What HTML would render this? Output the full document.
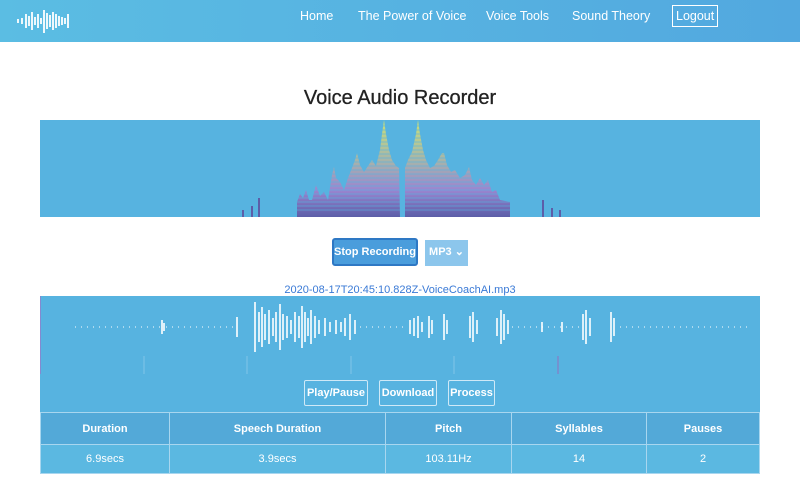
<!DOCTYPE html>
<html><head><meta charset="utf-8"><style>
*{margin:0;padding:0;box-sizing:border-box}
body{width:800px;height:483px;overflow:hidden;background:#fff;font-family:"Liberation Sans",sans-serif;position:relative}
.nav{position:absolute;left:0;top:0;width:800px;height:42px;background:linear-gradient(90deg,#5bbde3,#52a8df)}
.nav a{position:absolute;top:9px;color:#fff;font-size:12.5px}
.logout{border:1px solid #fff;padding:3px 3px;top:5px!important}
h1{position:absolute;top:87px;width:800px;text-align:center;font-size:20px;font-weight:normal;color:#222;-webkit-text-stroke:.3px #222}
.viz{position:absolute;left:40px;top:120px;width:720px;height:97px;background:#57b3e0}
.btn{position:absolute;color:#fff;font-size:11px;font-weight:bold;text-align:center}
.fn{position:absolute;top:284px;width:800px;text-align:center;color:#3a7ad6;font-size:11px}
.wave{position:absolute;left:40px;top:296px;width:720px;height:116px;background:#57b3e0}
table{position:absolute;left:40px;top:412px;width:720px;border-collapse:collapse;color:#fff;font-size:11px;text-align:center}
th{background:#53a9d8;height:32px;border:1px solid #a8d6ef}
td{background:#5bb8e1;height:29px;border:1px solid #a8d6ef}
</style></head><body>
<div class="nav">
<svg style="position:absolute;left:17px;top:8px" width="55" height="26" stroke="#fff" stroke-width="1.8">
<line x1="1" y1="11" x2="1" y2="15"/><line x1="5" y1="10" x2="5" y2="16"/><line x1="9" y1="6" x2="9" y2="20"/><line x1="12" y1="8" x2="12" y2="18"/><line x1="15" y1="4" x2="15" y2="22"/><line x1="18" y1="9" x2="18" y2="17"/><line x1="21" y1="6" x2="21" y2="20"/><line x1="24" y1="10" x2="24" y2="16"/><line x1="27" y1="2" x2="27" y2="25"/><line x1="30" y1="5" x2="30" y2="21"/><line x1="33" y1="7" x2="33" y2="19"/><line x1="36" y1="4" x2="36" y2="22"/><line x1="39" y1="6" x2="39" y2="20"/><line x1="42" y1="8" x2="42" y2="18"/><line x1="45" y1="9" x2="45" y2="17"/><line x1="48" y1="10" x2="48" y2="16"/><line x1="51" y1="6" x2="51" y2="20"/>
</svg>
<a style="left:300px">Home</a><a style="left:358px">The Power of Voice</a><a style="left:486px">Voice Tools</a><a style="left:572px">Sound Theory</a><a class="logout" style="left:672px">Logout</a>
</div>
<h1>Voice Audio Recorder</h1>
<div class="viz">
<svg width="720" height="97">
<defs><linearGradient id="g" x1="0" y1="0" x2="0" y2="1"><stop offset="0" stop-color="#c8e07a"/><stop offset=".4" stop-color="#a8b7a8"/><stop offset=".72" stop-color="#9a86d0"/><stop offset="1" stop-color="#5c5ea8"/></linearGradient></defs>
<polygon fill="url(#g)" points="257,97 257,82 260,74 263,78 266,70 269,80 272,80 276,65 280,76 284,72 288,80 292,55 294,47 296,58 300,62 304,70 308,58 312,48 315,40 317,33 320,45 324,52 328,46 332,40 336,46 340,30 342,14 344,0 346,14 349,30 352,40 356,46 359,48 360,97 365,97 365,48 368,40 372,32 376,14 378,0 380,14 383,30 386,40 390,48 394,46 398,40 402,33 404,33 407,45 411,52 415,50 420,58 425,55 429,47 432,60 436,65 440,58 444,65 448,60 452,72 456,70 460,80 470,82 470,97"/>
<g stroke="#57b3e0" stroke-width="1" opacity=".6">
<line x1="257" y1="90" x2="470" y2="90"/><line x1="257" y1="86" x2="470" y2="86"/><line x1="257" y1="82" x2="470" y2="82"/><line x1="257" y1="78" x2="470" y2="78"/><line x1="257" y1="74" x2="470" y2="74"/><line x1="257" y1="70" x2="470" y2="70"/><line x1="257" y1="66" x2="470" y2="66"/><line x1="257" y1="62" x2="470" y2="62"/><line x1="257" y1="58" x2="470" y2="58"/><line x1="257" y1="54" x2="470" y2="54"/><line x1="257" y1="50" x2="470" y2="50"/><line x1="257" y1="46" x2="470" y2="46"/><line x1="257" y1="42" x2="470" y2="42"/><line x1="257" y1="38" x2="470" y2="38"/><line x1="257" y1="34" x2="470" y2="34"/><line x1="257" y1="30" x2="470" y2="30"/><line x1="257" y1="26" x2="470" y2="26"/><line x1="257" y1="22" x2="470" y2="22"/><line x1="257" y1="18" x2="470" y2="18"/><line x1="257" y1="14" x2="470" y2="14"/><line x1="257" y1="10" x2="470" y2="10"/><line x1="257" y1="6" x2="470" y2="6"/></g>
<rect x="202" y="90" width="2" height="7" fill="#5c5ea8"/><rect x="211" y="86" width="2" height="11" fill="#5c5ea8"/><rect x="218" y="78" width="2" height="19" fill="#5c5ea8"/><rect x="502" y="80" width="2" height="17" fill="#5c5ea8"/><rect x="511" y="88" width="2" height="9" fill="#5c5ea8"/><rect x="519" y="90" width="2" height="7" fill="#5c5ea8"/>
</svg></div>
<div class="btn" style="left:332px;top:238px;width:86px;height:28px;background:#4a9ddc;border:2px solid #2e78c4;border-radius:3px;line-height:24px">Stop Recording</div>
<div class="btn" style="left:425px;top:240px;width:43px;height:26px;background:#8cc6ec;line-height:25px">MP3 ⌄</div>
<div class="fn">2020-08-17T20:45:10.828Z-VoiceCoachAI.mp3</div>
<div class="wave">
<svg width="720" height="116" stroke="#fff" stroke-width="1.6">
<line x1="122" y1="24" x2="122" y2="38"/><line x1="124" y1="27" x2="124" y2="35"/>
<line x1="197" y1="21" x2="197" y2="41"/>
<line x1="215" y1="6" x2="215" y2="56"/><line x1="219" y1="16" x2="219" y2="46"/><line x1="222" y1="11" x2="222" y2="51"/><line x1="225" y1="18" x2="225" y2="44"/><line x1="229" y1="14" x2="229" y2="48"/><line x1="233" y1="22" x2="233" y2="40"/><line x1="236" y1="16" x2="236" y2="46"/><line x1="240" y1="8" x2="240" y2="54"/><line x1="243" y1="18" x2="243" y2="44"/><line x1="247" y1="20" x2="247" y2="42"/><line x1="251" y1="24" x2="251" y2="38"/><line x1="255" y1="16" x2="255" y2="46"/><line x1="259" y1="20" x2="259" y2="42"/><line x1="262" y1="10" x2="262" y2="52"/><line x1="265" y1="16" x2="265" y2="46"/><line x1="268" y1="22" x2="268" y2="40"/><line x1="271" y1="14" x2="271" y2="48"/><line x1="275" y1="20" x2="275" y2="42"/><line x1="279" y1="24" x2="279" y2="38"/><line x1="285" y1="22" x2="285" y2="40"/><line x1="290" y1="26" x2="290" y2="36"/><line x1="296" y1="24" x2="296" y2="38"/><line x1="301" y1="26" x2="301" y2="36"/><line x1="305" y1="22" x2="305" y2="40"/><line x1="310" y1="18" x2="310" y2="44"/><line x1="315" y1="24" x2="315" y2="38"/>
<line x1="370" y1="24" x2="370" y2="38"/><line x1="374" y1="22" x2="374" y2="40"/><line x1="378" y1="20" x2="378" y2="42"/><line x1="382" y1="26" x2="382" y2="36"/><line x1="389" y1="20" x2="389" y2="42"/><line x1="392" y1="24" x2="392" y2="38"/><line x1="404" y1="18" x2="404" y2="44"/><line x1="407" y1="24" x2="407" y2="38"/><line x1="430" y1="20" x2="430" y2="42"/><line x1="433" y1="16" x2="433" y2="46"/><line x1="437" y1="24" x2="437" y2="38"/><line x1="457" y1="22" x2="457" y2="40"/><line x1="461" y1="14" x2="461" y2="48"/><line x1="464" y1="18" x2="464" y2="44"/><line x1="468" y1="24" x2="468" y2="38"/><line x1="502" y1="26" x2="502" y2="36"/><line x1="522" y1="26" x2="522" y2="36"/><line x1="543" y1="18" x2="543" y2="44"/><line x1="546" y1="14" x2="546" y2="48"/><line x1="550" y1="22" x2="550" y2="40"/><line x1="571" y1="16" x2="571" y2="46"/><line x1="574" y1="22" x2="574" y2="40"/>
<g stroke-width="1" stroke-dasharray="1 5"><line x1="35" y1="31" x2="120" y2="31"/><line x1="126" y1="31" x2="195" y2="31"/><line x1="320" y1="31" x2="368" y2="31"/><line x1="580" y1="31" x2="712" y2="31"/><line x1="472" y1="31" x2="540" y2="31"/></g>
<line x1="0" y1="0" x2="0" y2="78" stroke="#b060c0" stroke-width="1"/>
<g stroke-width=".6" stroke="#9fd0ee"><line x1="104" y1="60" x2="104" y2="78"/><line x1="207" y1="60" x2="207" y2="78"/><line x1="311" y1="60" x2="311" y2="78"/><line x1="414" y1="60" x2="414" y2="78"/></g>
<line x1="518" y1="60" x2="518" y2="78" stroke="#9070c0" stroke-width="1"/>
</svg>
<div class="btn" style="left:264px;top:84px;width:64px;height:26px;border:1px solid #cfe9f7;border-radius:2px;line-height:24px">Play/Pause</div>
<div class="btn" style="left:339px;top:84px;width:58px;height:26px;border:1px solid #cfe9f7;border-radius:2px;line-height:24px">Download</div>
<div class="btn" style="left:408px;top:84px;width:47px;height:26px;border:1px solid #cfe9f7;border-radius:2px;line-height:24px">Process</div>
</div>
<table><tr><th style="width:129px">Duration</th><th style="width:216px">Speech Duration</th><th style="width:126px">Pitch</th><th style="width:135px">Syllables</th><th>Pauses</th></tr>
<tr><td>6.9secs</td><td>3.9secs</td><td>103.11Hz</td><td>14</td><td>2</td></tr></table>
</body></html>
